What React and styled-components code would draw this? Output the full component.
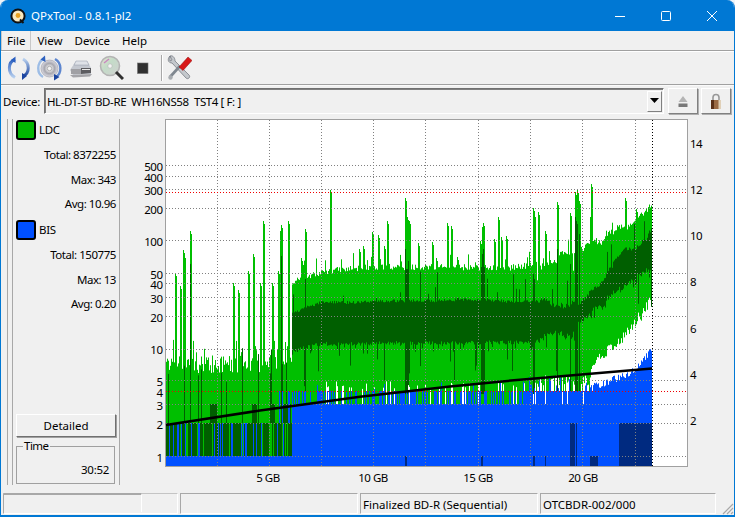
import React from "react";
import styled, { createGlobalStyle } from "styled-components";

const GlobalStyle = createGlobalStyle`
  html, body {
    margin: 0;
    padding: 0;
    background: #eef3f8;
  }
  body {
    font-family: "Noto Sans", "Open Sans", sans-serif;
    font-size: 11.5px;
    color: #000;
  }
`;

const Window = styled.div`
  box-sizing: border-box;
  width: 735px;
  height: 517px;
  display: flex;
  flex-direction: column;
  overflow: hidden;
  background: #f0f0f0;
  border-radius: 8px 8px 0 0;
  border-left: 1px solid #0078d4;
  border-right: 1px solid #0078d4;
  border-bottom: 2px solid #0078d4;
`;

const TitleBar = styled.div`
  height: 31px;
  flex: none;
  display: flex;
  align-items: center;
  margin: 0 -1px;
  background: #0078d4;
  color: #fff;
  font-size: 11.5px;
`;

const AppIcon = styled.svg`
  width: 16px;
  height: 16px;
  margin-left: 10px;
  margin-right: 5px;
`;

const TitleText = styled.span`
  flex: 1;
`;

const WinButton = styled.div`
  width: 46px;
  height: 31px;
  display: flex;
  align-items: center;
  justify-content: center;
`;

const MenuBar = styled.div`
  height: 19px;
  flex: none;
  display: flex;
  border-bottom: 1px solid #a0a0a0;
  box-shadow: 0 1px 0 #fff;
`;

const MenuItem = styled.div`
  padding: 0 6px;
  line-height: 20px;
  box-shadow: ${(p) => (p.$active ? "inset 1px 0 0 #c8c8c8, inset -1px 0 0 #c8c8c8" : "none")};
`;

const ToolBar = styled.div`
  height: 32px;
  margin-top: 1px;
  flex: none;
  display: flex;
  align-items: center;
  padding-left: 5px;
  border-bottom: 1px solid #a0a0a0;
  box-shadow: 0 1px 0 #fafafa;
`;

const ToolIcon = styled.svg`
  width: 25px;
  height: 26px;
  margin-right: 6px;
  flex: none;
`;

const ToolDivider = styled.div`
  width: 1px;
  height: 26px;
  margin: 0 4px 0 0;
  background: #a8a8a8;
  border-right: 1px solid #fff;
`;

const DeviceRow = styled.div`
  height: 32px;
  flex: none;
  display: flex;
  align-items: center;
  padding-left: 2px;
`;

const DeviceLabel = styled.span`
  width: 41px;
  flex: none;
  letter-spacing: -0.2px;
`;

const Combo = styled.div`
  box-sizing: border-box;
  width: 620px;
  height: 26px;
  display: flex;
  align-items: center;
  justify-content: space-between;
  padding-left: 2px;
  padding-right: 1px;
  border: 1px solid;
  border-color: #707070 #fff #fff #707070;
  box-shadow: inset 1px 1px 0 #808080;
  white-space: pre;
  letter-spacing: -0.4px;
`;

const ComboArrow = styled.div`
  box-sizing: border-box;
  width: 15px;
  height: 21px;
  display: flex;
  align-items: center;
  justify-content: center;
  border: 1px solid;
  border-color: #fff #808080 #808080 #fff;
`;

const SquareButton = styled.div`
  box-sizing: border-box;
  width: 30px;
  height: 26px;
  margin-left: ${(p) => p.$gap}px;
  display: flex;
  align-items: center;
  justify-content: center;
  border: 1px solid;
  border-color: #fff #808080 #808080 #fff;
  box-shadow: 1px 1px 0 #b0b0b0;
`;

const Main = styled.div`
  flex: 1;
  min-height: 0;
  display: flex;
`;

const Handle = styled.div`
  box-sizing: border-box;
  width: 6px;
  margin: 2px 0 5px 6px;
  border-left: 1px solid #a8a8a8;
  border-right: 1px solid #a8a8a8;
  flex: none;
`;

const SidePanel = styled.div`
  box-sizing: border-box;
  width: 107px;
  margin: 2px 0 5px;
  padding: 0 3px;
  flex: none;
  display: flex;
  flex-direction: column;
  border-right: 1px solid #a8a8a8;
`;

const LegendRow = styled.div`
  height: 21px;
  display: flex;
  align-items: center;
  gap: 3px;
  letter-spacing: -0.3px;
`;

const Swatch = styled.div`
  box-sizing: border-box;
  width: 20px;
  height: 20px;
  border: 2px solid #000;
  border-radius: 3px;
  background: ${(p) => p.$color};
`;

const Stat = styled.div`
  height: 24.5px;
  line-height: 24px;
  text-align: right;
  letter-spacing: -0.45px;
`;

const StatGroup = styled.div`
  margin-top: 3px;
  margin-bottom: 2.5px;
`;

const Spacer = styled.div`
  flex: 1;
`;

const DetailButton = styled.div`
  box-sizing: border-box;
  width: 100px;
  height: 23px;
  flex: none;
  line-height: 21px;
  text-align: center;
  border: 1px solid;
  border-color: #fff #707070 #707070 #fff;
  box-shadow: 1px 1px 0 #a0a0a0;
`;

const TimeBox = styled.fieldset`
  box-sizing: border-box;
  width: 99px;
  height: 43px;
  flex: none;
  margin: 4px 0 1px;
  padding: 11px 5px 0 6px;
  border: 1px solid #a0a0a0;
  text-align: right;
  line-height: 16px;
  letter-spacing: -0.3px;
  legend {
    text-align: left;
    padding: 0 1px;
    line-height: 10px;
    letter-spacing: -0.5px;
  }
`;

const ChartSvg = styled.svg`
  width: 613px;
  height: 372px;
  flex: none;
  display: block;
  font-family: "Noto Sans", "Open Sans", sans-serif;
  font-size: 11.5px;
  letter-spacing: -0.5px;
`;

const StatusBar = styled.div`
  height: 25px;
  flex: none;
  position: relative;
  display: flex;
  gap: 2px;
  padding: 3px 0 1px 2px;
  box-sizing: border-box;
`;

const Pane = styled.div`
  box-sizing: border-box;
  width: ${(p) => p.$w}px;
  padding-left: 2px;
  line-height: 21px;
  border: 1px solid;
  border-color: #a8a8a8 #fff #fff #a8a8a8;
  white-space: nowrap;
`;

const SplitPane = styled(Pane)`
  padding-left: 0;
  border-top-color: #c4c4c4;
`;

const InnerPane = styled.div`
  box-sizing: border-box;
  width: 138px;
  height: 100%;
  margin-top: -1px;
  border-top: 2px solid #a8a8a8;
  border-right: 1px solid #fff;
`;

const Grip = styled.svg`
  position: absolute;
  right: 0;
  bottom: 0;
  width: 13px;
  height: 13px;
`;

// seeded so the picture is the same on every load
let seed = 48271;
const rnd = () => {
  seed = (seed * 16807) % 2147483647;
  return seed / 2147483647;
};

const lerp = (pts, x) => {
  for (let i = 0; i < pts.length - 1; i++) {
    const [x0, y0] = pts[i];
    const [x1, y1] = pts[i + 1];
    if (x <= x1) return y0 + ((y1 - y0) * (x - x0)) / (x1 - x0);
  }
  return pts[pts.length - 1][1];
};

const GREEN_TOP = [[292, 285], [300, 279], [340, 272], [450, 271], [510, 272], [550, 266], [580, 256], [600, 247], [620, 234], [640, 216], [652, 208]];
const DARK_TOP = [[292, 313], [320, 302], [560, 301], [585, 295], [600, 278], [620, 252], [640, 238], [652, 228]];
const DARK_BOT = [[292, 350], [320, 343], [540, 342], [570, 335], [590, 318], [620, 290], [640, 278], [652, 273]];
const GREEN_BOT = [[590, 372], [600, 360], [610, 350], [625, 333], [640, 317], [652, 300]];
const BLUE_TOP = [[590, 385], [610, 378], [625, 372], [640, 362], [651, 345]];

const SPIKES = {
  175: 274, 180: 287, 183: 251, 184: 256, 190: 232, 233: 284, 238: 291, 248: 272, 253: 255, 260: 284, 263: 222,
  272: 284, 278: 272, 280: 232, 281: 226, 288: 222, 301: 259, 303: 266, 305: 230, 330: 191, 359: 250, 363: 247,
  372: 233, 378: 236, 384: 247, 387: 222, 405: 199, 407: 218, 408: 223, 409: 222, 418: 244, 432: 243, 436: 259,
  447: 224, 451: 227, 457: 258, 480: 242, 482: 228, 483: 224, 494: 240, 498: 218, 501: 238, 506: 237, 533: 209,
  534: 215, 538: 213, 545: 232, 557: 203, 570: 214, 575: 193, 577: 191, 579: 202, 590: 218, 591: 185, 625: 199, 636: 210,
};
const DARK_SPIKES = { 190: 265, 281: 257, 305: 280, 405: 250, 406: 270, 407: 270, 408: 262, 481: 268, 482: 255, 483: 250, 484: 268, 533: 275, 534: 280, 557: 250, 570: 265, 575: 218, 576: 222, 577: 225, 579: 235 };

const buildChart = () => {
  const light = [];
  const dark = [];
  const blue = [];
  const navy = [];
  const white = [];
  const seg = (list, x, a, b) => {
    if (b > a) list.push(`M${x + 0.5} ${a.toFixed(1)}V${b.toFixed(1)}`);
  };
  let walkTop = 0;
  let walkDark = 0;
  let walkBot = 0;
  const step = (v, rough, lim) => Math.max(-lim, Math.min(lim, v + (rnd() - 0.5) * 5 * rough));
  for (let x = 166; x < 652; x++) {
    if (x < 292) {
      let top = 356 + rnd() * 18;
      if (rnd() < 0.1) top = 340 + rnd() * 14;
      if (SPIKES[x]) top = SPIKES[x];
      if (SPIKES[x - 1] && SPIKES[x - 1] < top) top = SPIKES[x - 1] + 3;
      seg(light, x, top, 467);
      if (rnd() < 0.09) seg(dark, x, 345 + rnd() * 40, 424);
      if ((x >= 210 && x <= 216) || (x >= 252 && x <= 256) || (x >= 270 && x <= 274) || (x >= 282 && x <= 290)) seg(dark, x, 405, 424);
      if (DARK_SPIKES[x]) seg(dark, x, DARK_SPIKES[x], 424);
      const r = rnd();
      if (r < 0.17) seg(blue, x, 424, 457);
      else if (r < 0.82 || x < 174) seg(dark, x, 424, 457);
      if (x > 278 && rnd() < 0.12) seg(blue, x, 392, 424);
      seg(blue, x, 457, 467);
    } else {
      const rough = x >= 540 ? 1 : 0.08;
      walkTop = step(walkTop, rough, 6);
      walkDark = step(walkDark, rough, 7);
      walkBot = step(walkBot, rough, 7);
      let top = lerp(GREEN_TOP, x) - rnd() * 6 + 2 + walkTop;
      if (rnd() < 0.12) top -= rnd() * 14;
      if (x >= 530 && rnd() < 0.1) top += rnd() * 20;
      if (SPIKES[x]) top = SPIKES[x];
      if (SPIKES[x - 1] && SPIKES[x - 1] < top) top = SPIKES[x - 1] + 3;
      let bot = 405;
      if (x >= 590) bot = lerp(GREEN_BOT, x) + rnd() * 10 + walkBot;
      else if (x >= 520) bot = rnd() < 0.3 ? 405 : 376 + rnd() * 12;
      seg(light, x, top, bot);
      let dt = lerp(DARK_TOP, x) + rnd() * 3 + walkDark;
      let db = lerp(DARK_BOT, x) + rnd() * 4 + walkBot;
      if (rnd() < 0.07) dt -= rnd() * 28;
      if (rnd() < 0.14) db += rnd() * 10;
      if (rnd() < 0.06) db += rnd() * 40;
      if (DARK_SPIKES[x]) {
        dt = DARK_SPIKES[x];
        db = Math.max(db, 395);
      }
      seg(dark, x, dt, db);
      if (x > 325 && x < 520 && rnd() < 0.2) seg(white, x, 382 + rnd() * 8, 405);
      let bt = 405;
      if (x >= 590) bt = lerp(BLUE_TOP, x) + rnd() * 8;
      else if (x >= 520) {
        bt = rnd() < 0.88 ? 392 : 405;
        if (rnd() < 0.18) bt = 378 + rnd() * 12;
      } else if (rnd() < 0.45) bt = rnd() < 0.1 ? 380 + rnd() * 10 : 392;
      seg(blue, x, bt, 467);
      if (x >= 619) seg(navy, x, 424, 467);
      else if ((x >= 570 && x <= 574) || x === 576) seg(navy, x, 424, 467);
      else if ((x >= 533 && x <= 534) || x === 545 || (x >= 590 && x <= 597) || x === 405 || x === 406 || x === 481 || x === 482) seg(navy, x, 457, 467);
    }
  }
  return { light: light.join(""), dark: dark.join(""), blue: blue.join(""), navy: navy.join(""), white: white.join("") };
};

const chart = buildChart();

const H_LINES = [166.5, 177.5, 190.5, 209.5, 241.5, 274.5, 284.5, 298.5, 317.5, 350.5, 381.5, 405.5, 424.5, 457.5];
const V_LINES = [217.5, 269.5, 321.5, 373.5, 425.5, 478.5, 530.5, 582.5, 635.5];
const LEFT_AXIS = [[500, 172], [400, 183], [300, 196], [200, 215], [100, 247], [50, 280], [40, 290], [30, 304], [20, 323], [10, 355], [5, 387], [4, 398], [3, 411], [2, 430], [1, 463]];
const RIGHT_AXIS = [[14, 149], [12, 195], [10, 241], [8, 287], [6, 334], [4, 380], [2, 426]];
const X_AXIS = [["5 GB", 268], ["10 GB", 373], ["15 GB", 478], ["20 GB", 583]];

function QualityChart() {
  return (
    <ChartSvg viewBox="120 118 613 372">
      <rect x="165.5" y="120.5" width="522" height="347" fill="#fff" stroke="#a0a0a0" />
      <path d={chart.light} stroke="#00bf00" fill="none" />
      <path d={chart.dark} stroke="#005f00" fill="none" />
      <path d={chart.white} stroke="#fff" fill="none" />
      <path d={chart.blue} stroke="#0050ff" fill="none" />
      <path d={chart.navy} stroke="#002a80" fill="none" />
      {H_LINES.map((y) => (
        <line key={y} x1="166" x2="687" y1={y} y2={y} stroke="#808080" strokeDasharray="1 2" />
      ))}
      {V_LINES.map((x) => (
        <line key={x} x1={x} x2={x} y1="121" y2="467" stroke="#808080" strokeDasharray="1 2" />
      ))}
      <line x1="166" x2="687" y1="193.5" y2="193.5" stroke="#f00000" strokeDasharray="1 2" />
      <line x1="166" x2="687" y1="392.5" y2="392.5" stroke="#f00000" strokeDasharray="1 2" />
      <line x1="652.5" x2="652.5" y1="121" y2="467" stroke="#000" strokeDasharray="1 2" />
      <path d="M166 426 L260 411.5 L360 397.8 L450 387.5 L520 380.7 L652 369.5" stroke="#000" strokeWidth="2.5" fill="none" />
      {LEFT_AXIS.map(([v, y]) => (
        <text key={v} x="162.5" y={y} textAnchor="end">{v}</text>
      ))}
      {RIGHT_AXIS.map(([v, y]) => (
        <text key={v} x="690" y={y}>{v}</text>
      ))}
      {X_AXIS.map(([t, x]) => (
        <text key={t} x={x} y="483" textAnchor="middle">{t}</text>
      ))}
    </ChartSvg>
  );
}

function ReloadIcon() {
  return (
    <ToolIcon viewBox="0 0 25 26">
      <defs>
        <linearGradient id="arcA" x1="0" y1="0" x2="0" y2="1">
          <stop offset="0" stopColor="#2a5fc0" />
          <stop offset="1" stopColor="#b8d0ee" />
        </linearGradient>
        <linearGradient id="arcB" x1="0" y1="0" x2="0" y2="1">
          <stop offset="0" stopColor="#b8d0ee" />
          <stop offset="1" stopColor="#1c45a0" />
        </linearGradient>
      </defs>
      <path d="M9 4.5 C2 7 1 18 9 22.5" stroke="url(#arcA)" strokeWidth="3" fill="none" />
      <path d="M9.5 1.5 L9.5 8 L5 5 Z" fill="#2a5fc0" />
      <path d="M17 4 C24 8 24 18 17 21" stroke="url(#arcB)" strokeWidth="3" fill="none" />
      <path d="M16 18 L16 25 L21 21 Z" fill="#1c45a0" />
    </ToolIcon>
  );
}

function DiscReloadIcon() {
  return (
    <ToolIcon viewBox="0 0 25 26">
      <defs>
        <radialGradient id="disc" cx="0.5" cy="0.5" r="0.5">
          <stop offset="0.2" stopColor="#eeeeee" />
          <stop offset="0.6" stopColor="#a8a8b0" />
          <stop offset="1" stopColor="#dcdce4" />
        </radialGradient>
      </defs>
      <circle cx="12.5" cy="13.5" r="8.5" fill="url(#disc)" stroke="#9a9aa4" strokeWidth="0.6" />
      <circle cx="12.5" cy="13.5" r="2.2" fill="#f4f4f4" stroke="#888" strokeWidth="0.6" />
      <path d="M7 3.5 C-1 8 0 19 6 22" stroke="#9dbde6" strokeWidth="2.4" fill="none" />
      <path d="M8 0.5 L8.5 7 L3.5 4.5 Z" fill="#2f62bf" />
      <path d="M18 4 C25 8 25 18 19 22" stroke="#5d86cf" strokeWidth="2.4" fill="none" />
      <path d="M17 19 L17 25.5 L22.5 22 Z" fill="#1c45a0" />
    </ToolIcon>
  );
}

function DriveIcon() {
  return (
    <ToolIcon viewBox="0 0 25 26">
      <path d="M2 15 L8 6 L19 6 L23 13 L23 19 L5 20 Z" fill="#c4c8d0" />
      <path d="M8 6 L19 6 L21 10 L6 10 Z" fill="#dfe2e8" stroke="#9098a8" strokeWidth="0.5" />
      <path d="M3 14 L13 14 L13 19 L3 19 Z" fill="#a0a0a4" />
      <path d="M13 13 L23 13 L23 18 L13 19 Z" fill="#5c5c60" />
      <path d="M14 14.5 L22 14.5" stroke="#e8e8e8" strokeWidth="1" />
      <path d="M2 20 L24 19 L22 21.5 L5 22.5 Z" fill="#a4a4a8" />
    </ToolIcon>
  );
}

function ScanIcon() {
  return (
    <ToolIcon viewBox="0 0 25 26">
      <defs>
        <linearGradient id="lens" x1="0" y1="0" x2="1" y2="1">
          <stop offset="0" stopColor="#e8e0d0" />
          <stop offset="0.4" stopColor="#c4dcc8" />
          <stop offset="1" stopColor="#d0d0d0" />
        </linearGradient>
      </defs>
      <circle cx="11" cy="11" r="9.5" fill="url(#lens)" stroke="#b4b4b4" strokeWidth="1.6" />
      <circle cx="11" cy="11" r="2.2" fill="#f4f4f4" stroke="#aaa" strokeWidth="0.5" />
      <path d="M5 8 L10 4" stroke="#c888c0" strokeWidth="1.4" />
      <path d="M17 17 L24 24" stroke="#303030" strokeWidth="3" />
    </ToolIcon>
  );
}

function StopIcon() {
  return (
    <ToolIcon viewBox="0 0 25 26">
      <rect x="7.5" y="8" width="10.5" height="10.5" fill="#303030" stroke="#707070" strokeWidth="0.6" />
    </ToolIcon>
  );
}

function ToolsIcon() {
  return (
    <ToolIcon viewBox="0 0 25 26">
      <path d="M3 1 C0 4 1 8 5 8 L19 23 C21 25 24 22 22 20 L8 6 C8 2 5 0 3 1 L5 5 L3 6 Z" fill="#c4c8cc" stroke="#6c7078" strokeWidth="0.7" />
      <path d="M3 22 L13 11" stroke="#808890" strokeWidth="2.8" />
      <path d="M12 12 L21 2 L25 5.5 L16 15.5 Z" fill="#d81818" stroke="#901010" strokeWidth="0.5" />
      <circle cx="3.5" cy="22.5" r="2.2" fill="#a8acb0" />
    </ToolIcon>
  );
}

export default function App() {
  return (
    <>
      <GlobalStyle />
      <Window>
        <TitleBar>
          <AppIcon viewBox="0 0 16 16">
            <circle cx="8" cy="8" r="6.6" fill="#f8e8c0" stroke="#101010" strokeWidth="2" />
            <circle cx="8" cy="7.5" r="2.4" fill="#e8a020" />
            <path d="M10 11.5 L13.5 15" stroke="#101010" strokeWidth="2" />
          </AppIcon>
          <TitleText>QPxTool - 0.8.1-pl2</TitleText>
          <WinButton>
            <svg width="10" height="10"><path d="M0 5.5H10" stroke="#fff" /></svg>
          </WinButton>
          <WinButton>
            <svg width="10" height="10"><rect x="0.5" y="0.5" width="9" height="9" rx="1" fill="none" stroke="#fff" /></svg>
          </WinButton>
          <WinButton>
            <svg width="10" height="10"><path d="M0 0L10 10M10 0L0 10" stroke="#fff" /></svg>
          </WinButton>
        </TitleBar>
        <MenuBar>
          <MenuItem $active>File</MenuItem>
          <MenuItem>View</MenuItem>
          <MenuItem>Device</MenuItem>
          <MenuItem>Help</MenuItem>
        </MenuBar>
        <ToolBar>
          <ReloadIcon />
          <DiscReloadIcon />
          <DriveIcon />
          <ScanIcon />
          <StopIcon />
          <ToolDivider />
          <ToolsIcon />
        </ToolBar>
        <DeviceRow>
          <DeviceLabel>Device:</DeviceLabel>
          <Combo>
            <span>HL-DT-ST BD-RE  WH16NS58  TST4 [ F: ]</span>
            <ComboArrow>
              <svg width="9" height="6"><path d="M0 0H9L4.5 5Z" fill="#000" /></svg>
            </ComboArrow>
          </Combo>
          <SquareButton $gap={4}>
            <svg width="12" height="13" viewBox="0 0 12 13">
              <path d="M6 1L10.5 7H1.5Z" fill="#b4b4b4" />
              <rect x="1.5" y="8.5" width="9" height="3.5" fill="#787878" />
            </svg>
          </SquareButton>
          <SquareButton $gap={3}>
            <svg width="12" height="17" viewBox="0 0 12 17">
              <path d="M3 7V4.5a3 3 0 0 1 6 0V7" fill="none" stroke="#989898" strokeWidth="1.6" />
              <rect x="1" y="7" width="10" height="9" fill="#9a6a44" />
              <rect x="1" y="7" width="3" height="9" fill="#5a3018" />
              <rect x="8.5" y="7" width="2.5" height="9" fill="#e0d0b8" />
            </svg>
          </SquareButton>
        </DeviceRow>
        <Main>
          <Handle />
          <SidePanel>
            <LegendRow>
              <Swatch $color="#00b800" />
              LDC
            </LegendRow>
            <StatGroup>
              <Stat>Total: 8372255</Stat>
              <Stat>Max: 343</Stat>
              <Stat>Avg: 10.96</Stat>
            </StatGroup>
            <LegendRow>
              <Swatch $color="#0050ff" />
              BIS
            </LegendRow>
            <StatGroup>
              <Stat>Total: 150775</Stat>
              <Stat>Max: 13</Stat>
              <Stat>Avg: 0.20</Stat>
            </StatGroup>
            <Spacer />
            <DetailButton>Detailed</DetailButton>
            <TimeBox>
              <legend>Time</legend>
              30:52
            </TimeBox>
          </SidePanel>
          <QualityChart />
        </Main>
        <StatusBar>
          <SplitPane $w={175}>
            <InnerPane />
          </SplitPane>
          <Pane $w={178} />
          <Pane $w={178}>Finalized BD-R (Sequential)</Pane>
          <Pane $w={176}>OTCBDR-002/000</Pane>
          <Grip viewBox="0 0 13 13">
            <path d="M12 2L2 12M12 6L6 12M12 10L10 12" stroke="#a8a8a8" strokeWidth="1.2" />
          </Grip>
        </StatusBar>
      </Window>
    </>
  );
}
